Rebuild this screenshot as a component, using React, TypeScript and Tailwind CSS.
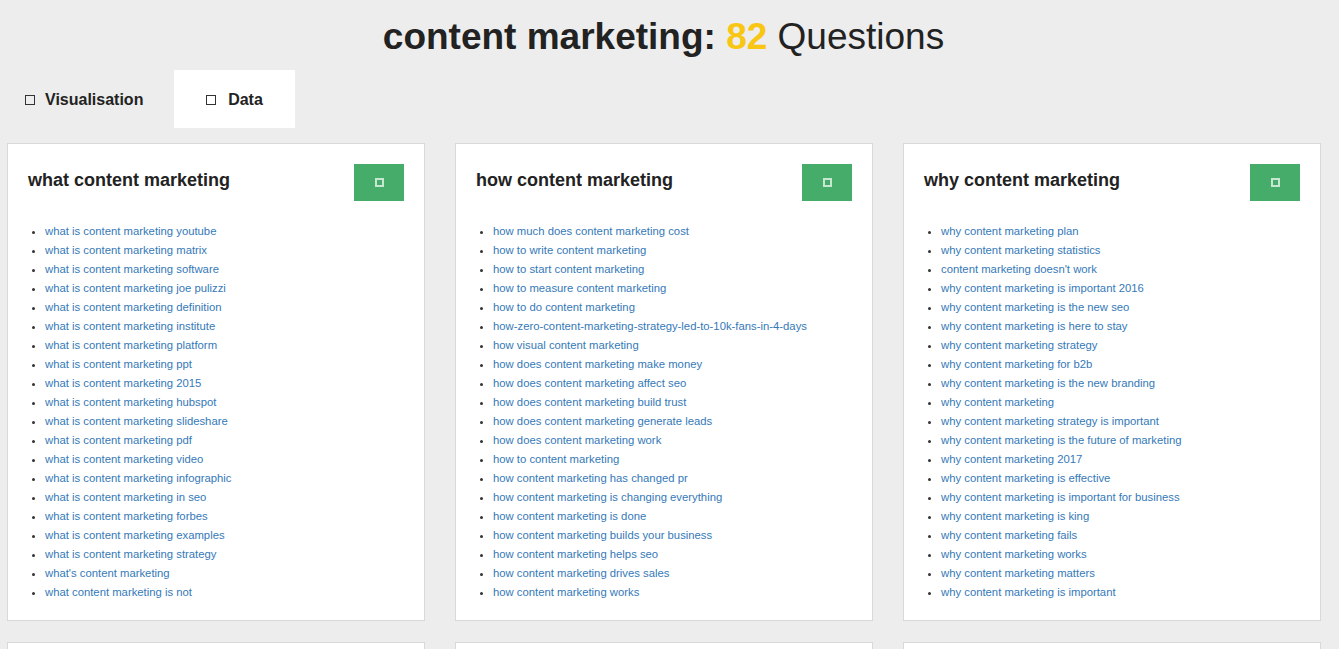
const font = { fontFamily: '"Liberation Sans", Arial, Helvetica, sans-serif' };

type Group = { title: string; items: string[] };

const groups: Group[] = [
  {
    title: "what content marketing",
    items: [
      "what is content marketing youtube",
      "what is content marketing matrix",
      "what is content marketing software",
      "what is content marketing joe pulizzi",
      "what is content marketing definition",
      "what is content marketing institute",
      "what is content marketing platform",
      "what is content marketing ppt",
      "what is content marketing 2015",
      "what is content marketing hubspot",
      "what is content marketing slideshare",
      "what is content marketing pdf",
      "what is content marketing video",
      "what is content marketing infographic",
      "what is content marketing in seo",
      "what is content marketing forbes",
      "what is content marketing examples",
      "what is content marketing strategy",
      "what's content marketing",
      "what content marketing is not",
    ],
  },
  {
    title: "how content marketing",
    items: [
      "how much does content marketing cost",
      "how to write content marketing",
      "how to start content marketing",
      "how to measure content marketing",
      "how to do content marketing",
      "how-zero-content-marketing-strategy-led-to-10k-fans-in-4-days",
      "how visual content marketing",
      "how does content marketing make money",
      "how does content marketing affect seo",
      "how does content marketing build trust",
      "how does content marketing generate leads",
      "how does content marketing work",
      "how to content marketing",
      "how content marketing has changed pr",
      "how content marketing is changing everything",
      "how content marketing is done",
      "how content marketing builds your business",
      "how content marketing helps seo",
      "how content marketing drives sales",
      "how content marketing works",
    ],
  },
  {
    title: "why content marketing",
    items: [
      "why content marketing plan",
      "why content marketing statistics",
      "content marketing doesn't work",
      "why content marketing is important 2016",
      "why content marketing is the new seo",
      "why content marketing is here to stay",
      "why content marketing strategy",
      "why content marketing for b2b",
      "why content marketing is the new branding",
      "why content marketing",
      "why content marketing strategy is important",
      "why content marketing is the future of marketing",
      "why content marketing 2017",
      "why content marketing is effective",
      "why content marketing is important for business",
      "why content marketing is king",
      "why content marketing fails",
      "why content marketing works",
      "why content marketing matters",
      "why content marketing is important",
    ],
  },
];

function Box({ light }: { light?: boolean }) {
  return light ? (
    <span className="inline-block h-[9px] w-[9px] border-2 border-white/70" />
  ) : (
    <span className="inline-block h-[10px] w-[10px] border-[1.5px] border-[#333]" />
  );
}

function Card({ group }: { group: Group }) {
  return (
    <div className="border border-[#d9d9d9] bg-white px-[20px] pt-[20px] pb-[18px]">
      <div className="flex items-center justify-between">
        <h2 className="mb-[4px] text-[18px] font-bold text-[#222]">{group.title}</h2>
        <button className="flex h-[37px] w-[50px] items-center justify-center bg-[#45ad69]">
          <Box light />
        </button>
      </div>
      <ul className="mt-[21px] list-disc pl-[17px] text-[11.3px] leading-[19px] text-[#333]">
        {group.items.map((q) => (
          <li key={q}>
            <a href="#" className="text-[#3579b8]">
              {q}
            </a>
          </li>
        ))}
      </ul>
    </div>
  );
}

export default function App() {
  return (
    <div className="min-h-screen bg-[#ededed] text-[#222]" style={font}>
      <header className="flex h-[70px] items-center justify-center pt-[4px] pr-[12px]">
        <h1 className="text-[37px]">
          <span className="font-bold">content marketing: </span>
          <span className="font-bold text-[#f8c613]">82</span> Questions
        </h1>
      </header>
      <nav className="flex h-[58px] text-[16px] font-bold">
        <div className="flex w-[174px] items-center gap-[10px] pl-[25px] pt-[2px]">
          <Box />
          Visualisation
        </div>
        <div className="flex w-[121px] items-center justify-center gap-[12px] bg-white pt-[2px]">
          <Box />
          Data
        </div>
      </nav>
      <main className="mt-[15px] grid grid-cols-[418px_418px_418px] gap-x-[30px] gap-y-[21px] pl-[7px] pb-[20px]">
        {groups.map((g) => (
          <Card key={g.title} group={g} />
        ))}
        <div className="h-[478px] border border-[#d9d9d9] bg-white" />
        <div className="h-[478px] border border-[#d9d9d9] bg-white" />
        <div className="h-[478px] border border-[#d9d9d9] bg-white" />
      </main>
    </div>
  );
}
